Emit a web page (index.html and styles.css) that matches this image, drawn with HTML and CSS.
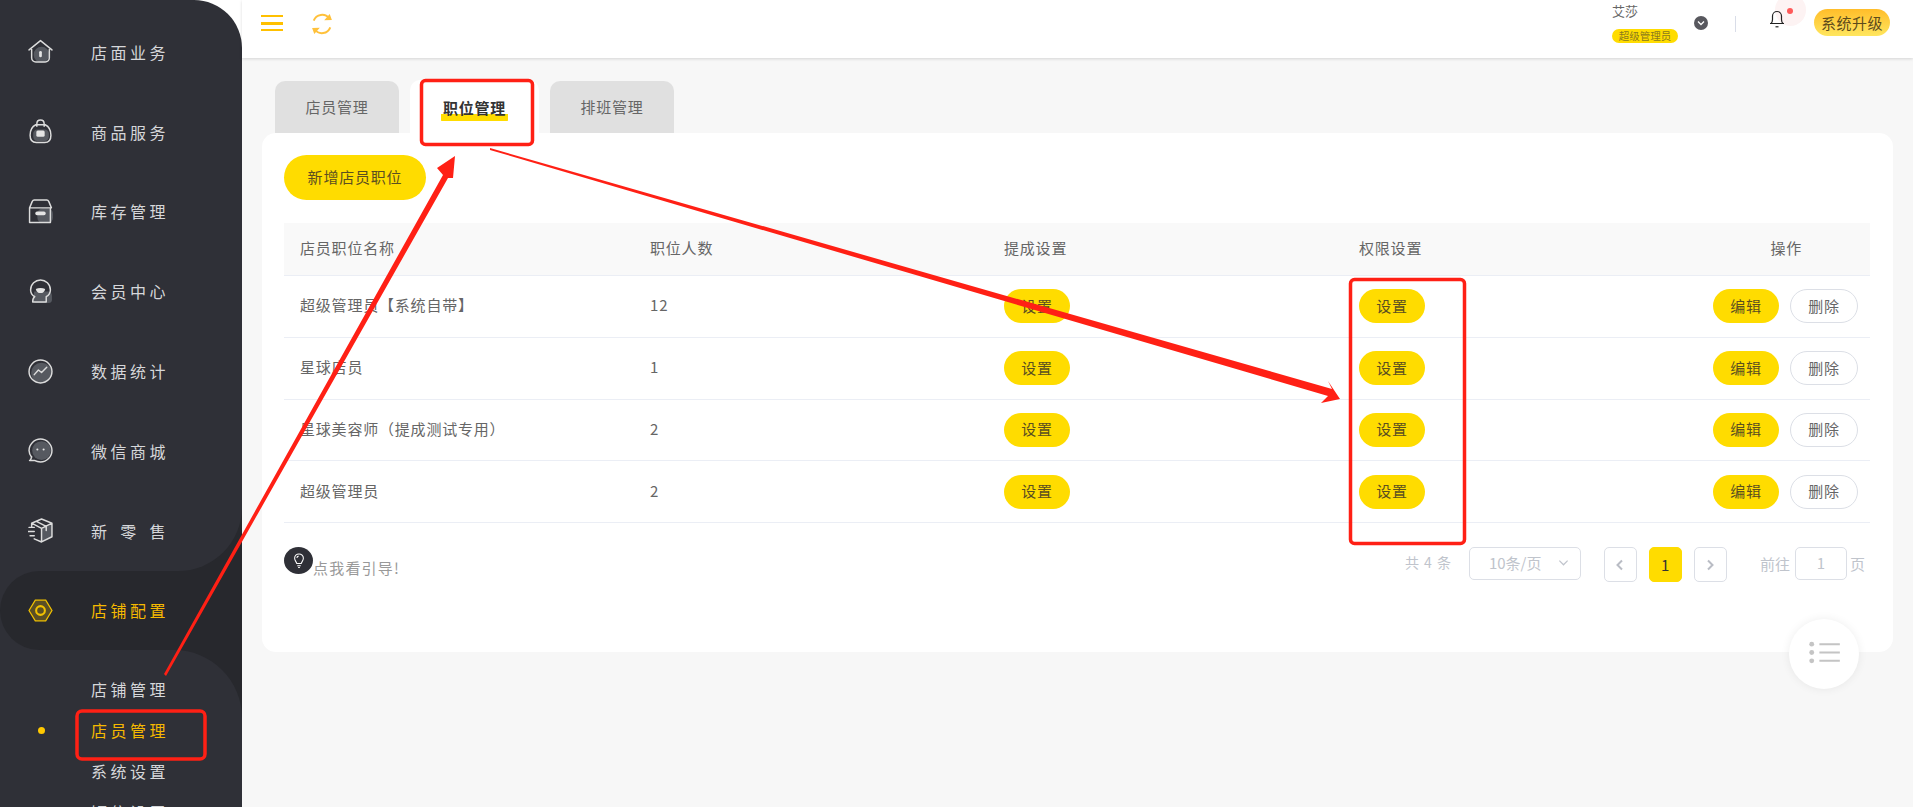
FILE: index.html
```html
<!DOCTYPE html>
<html lang="zh-CN">
<head>
<meta charset="utf-8">
<title>职位管理</title>
<link rel="stylesheet" href="styles.css">
</head>
<body>
<div class="app">
  <aside class="sidebar">
    <nav class="menu">
      <a class="item"><svg class="ico" viewBox="0 0 24 24"><circle class="blob" cx="13" cy="15" r="7.5"/><path class="ln" d="M1 10.500 12 1.500l11 9M3.500 10v8a4 4 0 0 0 4 4h9a4 4 0 0 0 4-4v-8"/><rect class="pill" x="10.700" y="11.500" width="2.600" height="6" rx="1.300"/></svg><span class="lbl">店面业务</span></a>
      <a class="item"><svg class="ico" viewBox="0 0 24 24"><rect class="blob" x="5" y="10" width="15" height="11" rx="4"/><path class="ln" d="M7.500 5.500h9c3 1.500 5.500 5 5.500 10 0 4-2 7-6 7H8c-4 0-6-3-6-7 0-5 2.500-8.500 5.500-10ZM8.500 7V4.500C8.500 2.500 10 1 12 1s3.500 1.500 3.500 3.500V7"/><rect class="pill" x="8" y="11" width="8" height="6" rx="1.500"/></svg><span class="lbl">商品服务</span></a>
      <a class="item"><svg class="ico" viewBox="0 0 24 24"><rect class="blob" x="9" y="9" width="15" height="14" rx="5"/><path class="ln" d="M1.500 8.500 4 2.500C4.500 1.500 5 1 6 1h12c1 0 1.500.5 2 1.500l2.500 6M1.500 8.500h21M1.500 8.500V22.500H21.500V8.500"/><rect class="pill" x="7" y="12" width="10" height="3.500" rx="1.700"/></svg><span class="lbl">库存管理</span></a>
      <a class="item"><svg class="ico" viewBox="0 0 24 24"><path class="blob" d="M6 12h13c3 0 4 2 4 5v3c0 2-1 3-3 3H8c-2 0-3-1-3-3Z"/><path class="ln" d="M6.500 17C4 15.500 2.500 13 2.500 10.500 2.500 5 7 1 12 1s9.500 4 9.500 9.500c0 2.500-1.500 5-4 6.500v5H4.500c0-2 .5-4 2-5Z"/><path class="pill" d="M7.500 9.500c2.500-1 6.500-1 9 0-.5 2.500-2 4-4.500 4s-4-1.500-4.500-4Z"/></svg><span class="lbl">会员中心</span></a>
      <a class="item"><svg class="ico" viewBox="0 0 24 24"><circle class="blob" cx="13" cy="13.500" r="10"/><circle class="ln" cx="12" cy="12" r="11"/><path class="ln" d="m6 15 4-4.500 3 2.500 5-5"/></svg><span class="lbl">数据统计</span></a>
      <a class="item"><svg class="ico" viewBox="0 0 24 24"><circle class="blob" cx="13" cy="12" r="9"/><path class="ln" d="M3.500 18.500C2 16.500 1 14.500 1 12 1 6 6 1 12 1s11 5 11 11-5 11-11 11c-2 0-4-.5-6-1.500H1.500c1 0 1.500-1.500 2-3.500Z"/><circle class="pill" cx="9" cy="11" r="1"/><circle class="pill" cx="15" cy="11" r="1"/></svg><span class="lbl">微信商城</span></a>
      <div class="curve-prev">
        <a class="item item-prev"><svg class="ico" viewBox="0 0 24 24"><path class="blob" d="m13 10 10-5v13l-10 5Z"/><path class="ln" d="M13 1 3.500 5v4M13 1l10 4v13l-10 5-7-3M3.500 5l9.500 5 10-5M13 10v13M8 3.300l9.500 4.700v4M1 9h5M0 13h6M2 17h4"/></svg><span class="lbl">新零售</span></a>
      </div>
      <a class="item item-active"><svg class="ico" viewBox="0 0 24 24"><path class="blob-y" d="M7 2.500h10l5.500 9.500-5.500 9.500H7L1.500 12Z"/><path class="ln-y" d="M7 2h10l6 10-6 10H7L1 12Z"/><circle class="ln-y ln-y-thick" cx="12" cy="12" r="4.200"/></svg><span class="lbl">店铺配置</span></a>
      <div class="curve-next">
        <div class="sub">
          <a class="sub-item"><span class="lbl">店铺管理</span></a>
          <a class="sub-item sub-active"><span class="dot"></span><span class="lbl">店员管理</span></a>
          <a class="sub-item"><span class="lbl">系统设置</span></a>
          <a class="sub-item"><span class="lbl">短信设置</span></a>
        </div>
      </div>
    </nav>
  </aside>

  <div class="main">
    <header class="topbar">
      <div class="top-left">
        <span class="burger"><i></i><i></i><i></i></span>
        <svg class="refresh" viewBox="0 0 20 20"><path d="M2.500 7A8 8 0 0 1 16.500 5M17.500 13A8 8 0 0 1 3.500 15"/><path class="arrowfill" d="m12 6.500 7-.2-2-5.300ZM8 13.500l-7 .2 2 5.300Z"/></svg>
      </div>
      <div class="top-right">
        <div class="user">
          <span class="uname">艾莎</span>
          <span class="role">超级管理员</span>
        </div>
        <span class="caret"><svg viewBox="0 0 14 14"><path d="m4 5.500 3 3 3-3"/></svg></span>
        <span class="divider"></span>
        <span class="bell-wrap">
          <span class="halo"></span>
          <svg class="bell" viewBox="0 0 14 18"><path d="M1 13.500c1-1 1.500-2 1.500-4V6a4.500 4.500 0 0 1 9 0v3.500c0 2 .5 3 1.500 4ZM0 13.500h14"/><path d="M5.500 16.800h3"/></svg>
          <span class="reddot"></span>
        </span>
        <span class="upgrade">系统升级</span>
      </div>
    </header>

    <main class="content">
      <div class="tabs">
        <div class="tab">店员管理</div>
        <div class="tab tab-active"><span class="mark">职位管理</span></div>
        <div class="tab">排班管理</div>
      </div>
      <section class="card">
        <button class="btn btn-add">新增店员职位</button>
        <table class="tbl">
          <colgroup><col class="c1"><col class="c2"><col class="c3"><col class="c4"><col></colgroup>
          <thead>
            <tr><th>店员职位名称</th><th>职位人数</th><th>提成设置</th><th>权限设置</th><th class="th-op">操作</th></tr>
          </thead>
          <tbody>
            <tr><td>超级管理员【系统自带】</td><td>12</td><td><button class="btn">设置</button></td><td><button class="btn">设置</button></td><td class="ops"><div class="ops-in"><button class="btn">编辑</button><button class="btn btn-del">删除</button></div></td></tr>
            <tr><td>星球店员</td><td>1</td><td><button class="btn">设置</button></td><td><button class="btn">设置</button></td><td class="ops"><div class="ops-in"><button class="btn">编辑</button><button class="btn btn-del">删除</button></div></td></tr>
            <tr><td>星球美容师（提成测试专用）</td><td>2</td><td><button class="btn">设置</button></td><td><button class="btn">设置</button></td><td class="ops"><div class="ops-in"><button class="btn">编辑</button><button class="btn btn-del">删除</button></div></td></tr>
            <tr><td>超级管理员</td><td>2</td><td><button class="btn">设置</button></td><td><button class="btn">设置</button></td><td class="ops"><div class="ops-in"><button class="btn">编辑</button><button class="btn btn-del">删除</button></div></td></tr>
          </tbody>
        </table>
        <div class="foot">
          <div class="guide">
            <span class="guide-ico"><svg viewBox="0 0 16 18"><path d="M5.500 12.500c0-1.500-2.500-3-2.500-6a5 5 0 0 1 10 0c0 3-2.500 4.500-2.500 6Z"/><path d="M6 15h4M7 17h2M5.500 6a2.500 2.500 0 0 1 2-2"/></svg></span>
            <span class="guide-txt">点我看引导!</span>
          </div>
          <div class="pager">
            <span class="total">共 4 条</span>
            <span class="select">10条/页<svg viewBox="0 0 12 12"><path d="m1.500 4 4.500 4.500L10.500 4"/></svg></span>
            <span class="pg"><svg viewBox="0 0 12 12"><path d="M8 1.500 3.500 6 8 10.500"/></svg></span>
            <span class="pg pg-on">1</span>
            <span class="pg pg-last"><svg viewBox="0 0 12 12"><path d="M4 1.500 8.500 6 4 10.500"/></svg></span>
            <span class="goto">前往</span>
            <span class="jump">1</span>
            <span class="goto">页</span>
          </div>
        </div>
      </section>
    </main>
  </div>
</div>

<div class="fab"><svg viewBox="0 0 24 18"><circle cx="2" cy="2.500" r="1.900"/><circle cx="2" cy="9" r="1.900"/><circle cx="2" cy="15.500" r="1.900"/><path d="M8 2.500h16M8 9h16M8 15.500h16"/></svg></div>

<svg class="notes" viewBox="0 0 1913 807">
  <rect x="421.500" y="80.500" width="111" height="64" rx="4"/>
  <rect x="1350.500" y="279.500" width="114" height="264" rx="4"/>
  <rect x="77" y="711" width="128" height="48" rx="5"/>
  <polygon points="164,674 443,175 437,168 455,156 453,178 448,178 166,676"/>
  <polygon points="490,148 1332,389 1328,381 1340,399 1321,403 1327,397 1328,396 490,150"/>
</svg>
</body>
</html>
```

FILE: styles.css
```css
* { box-sizing: border-box; }
html, body { margin: 0; height: 100%; overflow: hidden; }
body {
  font-family: "Noto Sans CJK SC", "Noto Sans", sans-serif;
  font-size: 15px;
  letter-spacing: .8px;
  color: #666;
  background: #fff;
}
.app { display: flex; height: 807px; background: #fff; overflow: hidden; }

/* sidebar */
.sidebar {
  width: 242px;
  flex: none;
  background: #2f3037;
  border-top-right-radius: 48px;
  overflow: hidden;
  color: #d6d7da;
}
.menu { padding-top: 12px; }
.item {
  display: flex;
  align-items: center;
  height: 79.800px;
  padding-left: 28px;
  gap: 38px;
  font-size: 16px;
}
.lbl {
  display: block;
  width: 74.500px;
  text-align: justify;
  text-align-last: justify;
  letter-spacing: 0;
  line-height: 24px;
}
.ico { width: 25px; height: 25px; flex: none; fill: none; }
.ln { fill: none; stroke: #dcdcdc; stroke-width: 1.400; stroke-linecap: round; stroke-linejoin: round; }
.blob { fill: #565960; }
.pill { fill: #e4e4e4; }
.ln-y { fill: none; stroke: #f2c200; stroke-width: 1.200; }
.ln-y-thick { stroke-width: 2; }
.blob-y { fill: #5a4f25; }
.curve-prev { background: #27282d; }
.item-prev { background: #2f3037; border-bottom-right-radius: 64px; }
.item-active {
  background: #27282d;
  border-radius: 40px 0 0 40px;
  color: #f5b900;
}
.curve-next { background: #27282d; }
.sub {
  background: #2f3037;
  border-top-right-radius: 68px;
  padding-top: 18px;
  height: 190px;
}
.sub-item {
  display: flex;
  align-items: center;
  height: 41px;
  padding-left: 91px;
  font-size: 16px;
  position: relative;
}
.sub-active { color: #f5b900; }
.dot {
  position: absolute;
  left: 38px;
  top: 18px;
  width: 7px;
  height: 7px;
  border-radius: 50%;
  background: #ffc800;
}

/* top bar */
.main { flex: 1; min-width: 0; background: #f7f7f7; }
.topbar {
  height: 58px;
  background: #fff;
  box-shadow: 0 1px 3px rgba(0, 0, 0, .14);
  display: flex;
  justify-content: space-between;
  padding: 0 23px 0 19px;
  position: relative;
}
.top-left { display: flex; align-items: flex-start; gap: 28px; padding-top: 15px; }
.burger { display: flex; flex-direction: column; justify-content: space-between; width: 22px; height: 16px; }
.burger i { display: block; height: 2px; background: #ffc000; }
.burger i:nth-child(2) { height: 3px; }
.refresh { width: 22px; height: 22px; margin-top: -2px; fill: none; stroke: #ffc13b; stroke-width: 1.800; }
.arrowfill { fill: #ffc13b; stroke: none; }
.top-right { display: flex; align-items: flex-start; }
.user { display: flex; flex-direction: column; align-items: flex-start; width: 82px; padding-top: 2px; }
.uname { font-size: 13px; line-height: 18px; letter-spacing: 0; color: #666; }
.role {
  margin-top: 9px;
  width: 66px;
  height: 14px;
  border-radius: 7px;
  background: #ffdc00;
  color: #8c7a1e;
  font-size: 10.500px;
  line-height: 14px;
  text-align: center;
  letter-spacing: 0;
}
.caret { width: 14px; height: 14px; margin-top: 16px; border-radius: 50%; background: #58585e; }
.caret svg { display: block; fill: none; stroke: #fff; stroke-width: 1.300; }
.divider { width: 1px; height: 16px; margin: 16px 0 0 27px; background: #d9dde8; }
.bell-wrap { position: relative; width: 14px; height: 18px; margin: 10px 0 0 34px; }
.bell { position: absolute; inset: 0; width: 14px; height: 18px; fill: none; stroke: #222; stroke-width: 1.200; }
.halo { position: absolute; left: 5px; top: -16px; width: 31px; height: 32px; border-radius: 50%; background: #fdf3f3; }
.reddot { position: absolute; left: 17px; top: -2px; width: 6px; height: 6px; border-radius: 50%; background: #ff5a5a; }
.upgrade {
  margin: 9px 0 0 30px;
  width: 76px;
  height: 27px;
  border-radius: 14px;
  background: linear-gradient(#ffbd2a, #ffe65e);
  color: #5d4b1b;
  font-size: 15px;
  line-height: 27px;
  text-align: center;
  letter-spacing: .5px;
}

/* content */
.content { padding: 22px 20px 0; }
.tabs { display: flex; gap: 11px; padding-left: 13px; height: 53px; align-items: flex-end; }
.tab {
  width: 124px;
  height: 52px;
  background: #e0e0e0;
  border-radius: 10px 10px 0 0;
  text-align: center;
  line-height: 51px;
}
.tab-active { width: 129px; height: 53px; background: #fff; color: #333; font-weight: 700; padding-top: 14px; line-height: 28px; }
.mark { display: inline-block; line-height: 28px; padding: 0 2px; background: linear-gradient(transparent 72%, #ffdc00 72%, #ffdc00 95%, transparent 95%); border-radius: 2px; }
.card {
  height: 519px;
  background: #fff;
  border-radius: 14px;
  padding: 22px 23px 0 22px;
  position: relative;
}
.btn {
  font: inherit;
  letter-spacing: inherit;
  border: 0;
  background: #ffdc00;
  color: #5b4f20;
  width: 66px;
  height: 34px;
  border-radius: 17px;
  padding: 0 0 2px;
  display: block;
}
.btn-add { width: 142px; height: 45px; border-radius: 23px; margin-bottom: 23px; }
.tbl { width: 100%; border-collapse: collapse; table-layout: fixed; }
.c1 { width: 350px; } .c2 { width: 354px; } .c3 { width: 355px; } .c4 { width: 200px; }
.tbl th { height: 52.500px; background: #f9f9f9; font-weight: 400; text-align: left; padding: 0 0 3px 16px; border-bottom: 1px solid #ebeef5; }
.tbl td { height: 61.750px; padding: 0 0 0 16px; border-bottom: 1px solid #ebeef5; color: #666; }
.tbl td:nth-child(-n+2) { padding-bottom: 3px; }
.tbl .th-op { text-align: right; padding-right: 68px; }
.tbl .ops { padding: 0 12px 0 0; }
.ops-in { display: flex; justify-content: flex-end; align-items: center; gap: 11px; }
.btn-del { width: 68px; background: #fff; border: 1px solid #dcdfe6; color: #666; }
.foot { display: flex; justify-content: space-between; padding-top: 24px; }
.guide { display: flex; align-items: flex-start; }
.guide-ico { width: 29px; height: 27px; border-radius: 50%; background: #2f3037; display: flex; align-items: center; justify-content: center; }
.guide-ico svg { width: 14px; height: 17px; fill: none; stroke: #fff; stroke-width: 1.200; }
.guide-txt { color: #999; margin-top: 10px; line-height: 21px; letter-spacing: 1.200px; font-size: 15px; }
.pager { display: flex; align-items: flex-start; height: 35px; padding-right: 5px; color: #c0c4cc; }
.total { margin: 0 17px 0 0; line-height: 31px; font-size: 14px; letter-spacing: 1px; }
.select {
  width: 112px; height: 33px; border: 1px solid #dcdfe6; border-radius: 5px;
  display: flex; align-items: center; justify-content: space-between;
  padding: 0 11px 2px 19px; margin-right: 23px; font-size: 15px; letter-spacing: 0;
}
.select svg { width: 11px; height: 11px; fill: none; stroke: #c0c4cc; stroke-width: 1.300; }
.pg {
  width: 33px; height: 35px; border: 1px solid #dcdfe6; border-radius: 5px;
  display: flex; align-items: center; justify-content: center; margin-right: 12px;
}
.pg svg { width: 12px; height: 12px; fill: none; stroke: #b9bcc4; stroke-width: 2; }
.pg-on { background: #ffdc00; border-color: #ffdc00; color: #333; }
.pg-last { margin-right: 33px; }
.goto { line-height: 33px; letter-spacing: 0; font-size: 15px; }
.jump { width: 52px; height: 33px; border: 1px solid #dcdfe6; border-radius: 5px; text-align: center; line-height: 29px; margin: 0 3px 0 5px; letter-spacing: 0; }

/* floating button */
.fab {
  position: absolute; left: 1789px; top: 619px; width: 70px; height: 70px;
  border-radius: 50%; background: #fff; box-shadow: 0 0 10px rgba(0, 0, 0, .07);
  display: flex; align-items: center; justify-content: center;
}
.fab svg { width: 31px; height: 23px; margin-bottom: 3px; fill: #c4c4c4; stroke: none; }
.fab svg path { fill: none; stroke: #c4c4c4; stroke-width: 1.500; }

/* red review annotations drawn over the screenshot */
.notes { position: absolute; left: 0; top: 0; width: 1913px; height: 807px; pointer-events: none; }
.notes rect { fill: none; stroke: #ff2015; stroke-width: 3.500; }
.notes polygon { fill: #ff2015; }
```
